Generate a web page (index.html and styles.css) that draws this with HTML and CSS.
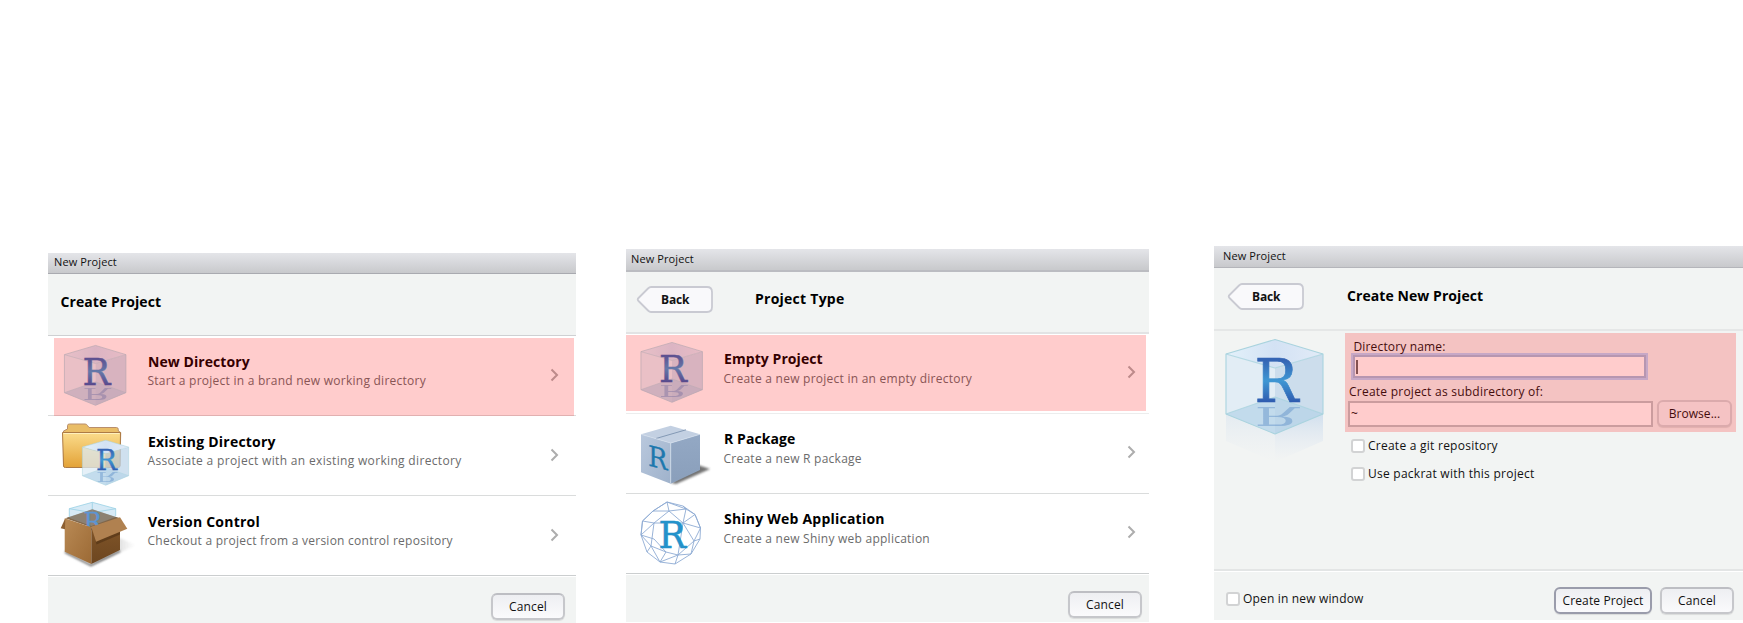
FILE: index.html
```
<!DOCTYPE html>
<html lang="en">
<head>
<meta charset="utf-8">
<title>New Project</title>
<link rel="stylesheet" href="styles.css">
</head>
<body>
<svg class="defs" width="0" height="0">
  <defs>
    <linearGradient id="rblue" x1="0" y1="0" x2="0" y2="1">
      <stop offset=".2" stop-color="#3565b4"/><stop offset=".5" stop-color="#3f97d3"/><stop offset=".8" stop-color="#2f5cb0"/>
    </linearGradient>
    <linearGradient id="fade" x1="0" y1="0" x2="0" y2="1">
      <stop offset="0" stop-color="#c3d7ec" stop-opacity=".7"/><stop offset="1" stop-color="#dfe6f2" stop-opacity="0"/>
    </linearGradient>
    <linearGradient id="topface" x1="0" y1="0" x2="1" y2="0">
      <stop offset="0" stop-color="#e3f1fa"/><stop offset=".5" stop-color="#d3e2f4"/><stop offset="1" stop-color="#e2ebf7"/>
    </linearGradient>
    <linearGradient id="folder" x1="0" y1="0" x2="0" y2="1">
      <stop offset="0" stop-color="#fbdc8c"/><stop offset="1" stop-color="#e3a237"/>
    </linearGradient>
    <linearGradient id="carton" x1="0" y1="0" x2="1" y2="1">
      <stop offset="0" stop-color="#b98a55"/><stop offset="1" stop-color="#9c6a35"/>
    </linearGradient>
    <linearGradient id="cartonDark" x1="0" y1="0" x2="0" y2="1">
      <stop offset="0" stop-color="#84582a"/><stop offset="1" stop-color="#6d4620"/>
    </linearGradient>
    <linearGradient id="steelL" x1="0" y1="0" x2="1" y2="1">
      <stop offset="0" stop-color="#b9c8dd"/><stop offset="1" stop-color="#9fb2cb"/>
    </linearGradient>
    <linearGradient id="steelR" x1="0" y1="0" x2="0" y2="1">
      <stop offset="0" stop-color="#93a8c4"/><stop offset="1" stop-color="#8a9fbb"/>
    </linearGradient>
    <linearGradient id="shade" x1="0" y1="0" x2="1" y2="0">
      <stop offset="0" stop-color="#444" stop-opacity=".75"/><stop offset="1" stop-color="#666" stop-opacity="0"/>
    </linearGradient>
    <filter id="soft" x="-20%" y="-20%" width="140%" height="140%"><feGaussianBlur stdDeviation="1.2"/></filter>
    <clipPath id="floor"><path d="M1 76 50 59 98 76 50 96z"/></clipPath>
    <symbol id="cube" viewBox="0 0 100 98" overflow="visible">
      <path d="M1 16 50 30V96L1 76z" fill="#dcebf6" opacity=".75"/>
      <path d="M98 16 50 30V96L98 76z" fill="#bfd5e9" opacity=".75"/>
      <path d="M50 1.500 98 16 50 30 1 16z" fill="url(#topface)"/>
      <path d="M1 76 50 59 98 76 50 96z" fill="#b5d3e8" opacity=".7"/>
      <g clip-path="url(#floor)" opacity=".35"><text class="glyph" transform="translate(29.500 68.500) scale(1 -.42)" font-size="60" textLength="44" lengthAdjust="spacingAndGlyphs" fill="#3f78bd">R</text></g>
      <g fill="none" stroke="#a9d3de" stroke-width="1.100" stroke-linejoin="round">
        <path d="M50 1.500 98 16V76L50 96 1 76V16z"/><path d="M1 16 50 30 98 16M1 76 50 59 98 76" opacity=".8"/>
      </g>
      <text class="glyph" x="29.500" y="63.500" font-size="59.500" textLength="44" lengthAdjust="spacingAndGlyphs" fill="url(#rblue)" stroke="url(#rblue)" stroke-width=".7">R</text>
    </symbol>
    <symbol id="chevron" viewBox="0 0 9 14"><path d="M1.500 1.500 7 7 1.500 12.500" fill="none" stroke="#adadad" stroke-width="2"/></symbol>
    <symbol id="backshape" viewBox="0 0 78 29">
      <path d="M15 2H71Q76 2 76 7V22Q76 27 71 27H15Q13.500 27 12 25.500L2.500 16Q1 14.500 2.500 13L12 3.500Q13.500 2 15 2z" fill="#f9f9fb" stroke="#c9cad2" stroke-width="1.800"/>
    </symbol>
  </defs>
</svg>

<main class="stage">
  <section class="panel panel-create">
    <div class="titlebar">New Project</div>
    <header class="head"><h1>Create Project</h1></header>
    <div class="rows">
      <div class="row marked">
        <svg class="pic" viewBox="0 0 100 79"><use href="#cube" x="15.800" y="8.500" width="63.400" height="62.100"/></svg>
        <div class="copy"><h2>New Directory</h2><p>Start a project in a brand new working directory</p></div>
        <svg class="chev"><use href="#chevron"/></svg>
      </div>
      <div class="row">
        <svg class="pic" viewBox="0 0 100 79">
          <path d="M15.500 50V15L19.500 13V9.500Q19.500 8 21.500 8H37Q38.700 8 39.500 9.500L41 11.500H68.500Q70.300 11.500 70.300 13.500V15L72.700 16.500 72 50z" fill="#e9bd67" stroke="#b98e6c"/>
          <path d="M14.500 16.500H72.500L72 50Q72 51.500 70 51.500H17.500Q15.500 51.500 15.500 50z" fill="url(#folder)" stroke="#ad7b45"/>
          <path d="M15.500 17.500H71.500" stroke="#fff0bd"/>
          <use href="#cube" x="33.900" y="23.500" width="47.700" height="46.700"/>
        </svg>
        <div class="copy"><h2 class="loose">Existing Directory</h2><p class="wide">Associate a project with an existing working directory</p></div>
        <svg class="chev"><use href="#chevron"/></svg>
      </div>
      <div class="row">
        <svg class="pic" viewBox="0 0 100 79">
          <path d="M72 42 88 49.300 60 62 44 68z" fill="url(#shade)" opacity=".6" filter="url(#soft)"/>
          <path d="M17 56 43 69.500 72 55" fill="none" stroke="#777" stroke-width="2" filter="url(#soft)"/>
          <path d="M17.300 22.300 44.300 13.300 72 22.300 43.300 31.300z" fill="#8a6d4e"/>
          <path d="M21.300 12.700 44.300 6.300 67.700 12.700V21L43.300 30 21.300 22z" fill="#bcdcf0" opacity=".6"/>
          <path d="M21.300 21V12.700L44.300 6.300 67.700 12.700V20M21.300 12.700 44.300 16.700 67.700 12.700M44.300 6.300V16" fill="none" stroke="#98d0e4" stroke-width=".8"/>
          <path d="M19 21.700 44.300 13.300 70 21.700 43.300 31z" fill="#7a634a" opacity=".6"/>
          <text class="glyph" x="35.500" y="34" font-size="25" textLength="18.500" lengthAdjust="spacingAndGlyphs" fill="#5c95d3" stroke="#5c95d3" stroke-width=".3">R</text>
          <path d="M16.700 22.300 43.300 31.300V68L16.700 55.700z" fill="url(#carton)"/>
          <path d="M72 22.300 43.300 31.300V68L72 54z" fill="url(#cartonDark)"/>
          <path d="M17.300 22.300 12.700 32.300 17 33.300z" fill="#8d6032"/>
          <path d="M45 34 48.500 48.500 72 38.500V35z" fill="#4b2e12" opacity=".55"/>
          <path d="M43.300 30.700 72 21.300 79.300 32.700 48 45.700z" fill="#b08150"/>
        </svg>
        <div class="copy"><h2 class="loose">Version Control</h2><p>Checkout a project from a version control repository</p></div>
        <svg class="chev"><use href="#chevron"/></svg>
      </div>
    </div>
    <footer class="foot"><button class="btn cancel">Cancel</button></footer>
  </section>

  <section class="panel panel-type">
    <div class="titlebar">New Project</div>
    <header class="head"><span class="back"><svg><use href="#backshape"/></svg><b>Back</b></span><h1>Project Type</h1></header>
    <div class="rows">
      <div class="row marked">
        <svg class="pic" viewBox="0 0 98 79"><use href="#cube" x="14.300" y="7.500" width="63.400" height="62.100"/></svg>
        <div class="copy"><h2>Empty Project</h2><p>Create a new project in an empty directory</p></div>
        <svg class="chev"><use href="#chevron"/></svg>
      </div>
      <div class="row">
        <svg class="pic" viewBox="0 0 98 79">
          <path d="M72 51 84 55 50 70 45 69z" fill="#444" opacity=".75" filter="url(#soft)"/>
          <path d="M15 20.300 44.700 29V69.700L15 58.300z" fill="url(#steelL)"/>
          <path d="M74 20.300 44.700 29V69.700L74 56z" fill="url(#steelR)"/>
          <path d="M44.700 11.700 74 20.300 44.700 29 15 20.300z" fill="#c3d0e2"/>
          <path d="M30 24.500 60 15.800" stroke="#8399b5"/>
          <path d="M44.700 29V69.500M15 20.300 44.700 29 74 20.300" fill="none" stroke="#d2ddeb" stroke-width=".8"/>
          <text class="glyph" transform="translate(22 51.500) skewY(14)" font-size="28.500" textLength="19.500" lengthAdjust="spacingAndGlyphs" fill="#1e78ae" stroke="#1e78ae" stroke-width=".3">R</text>
        </svg>
        <div class="copy"><h2>R Package</h2><p>Create a new R package</p></div>
        <svg class="chev"><use href="#chevron"/></svg>
      </div>
      <div class="row">
        <svg class="pic" viewBox="0 0 98 79">
          <g fill="none" stroke="#8eabd4" stroke-width=".9" stroke-linejoin="round">
            <path d="M41 8 57 12 69 20.500 74.500 34 74 45 65 60 49 70 34 68 21 58 15 41 16.500 27 27 17z"/>
            <path d="M27 17 41 8 43 17 60 15 57 12M43 17 27 17 16.500 27 28 29 43 17 57 29 60 15 69 20.500M28 29 15 41 25 52 21 58M28 29 25 52 34 68M28 29 57 29 74.500 34 69 20.500M57 29 69 20.500M57 29 68 47 74 45M74.500 34 68 47 65 60M68 47 52 61 65 60M52 61 49 70M52 61 34 68M25 52 40 58 34 68M40 58 52 61M15 41 28 45 40 58M57 29 52 61M16.500 27 15 41M41 8 60 15"/>
          </g>
          <text class="glyph" x="32.500" y="53.800" font-size="38" textLength="27.500" lengthAdjust="spacingAndGlyphs" fill="#2492ca" stroke="#2492ca" stroke-width=".5">R</text>
        </svg>
        <div class="copy"><h2 class="loose">Shiny Web Application</h2><p>Create a new Shiny web application</p></div>
        <svg class="chev"><use href="#chevron"/></svg>
      </div>
    </div>
    <footer class="foot"><button class="btn cancel">Cancel</button></footer>
  </section>

  <section class="panel panel-form">
    <div class="titlebar">New Project</div>
    <header class="head"><span class="back"><svg><use href="#backshape"/></svg><b>Back</b></span><h1>Create New Project</h1></header>
    <div class="body">
      <svg class="hero" viewBox="0 0 110 140">
        <path d="M1 76 50 96V124L1 103z" fill="url(#fade)" opacity=".45"/>
        <path d="M98 76 50 96V124L98 103z" fill="url(#fade)"/>
        <use href="#cube" width="100" height="98"/>
      </svg>
      <div class="form">
        <div class="fields">
          <label class="lab-dir">Directory name:</label>
          <div class="input focus"><i></i></div>
          <label class="lab-sub">Create project as subdirectory of:</label>
          <div class="pair"><div class="input path">~</div><button class="btn browse">Browse...</button></div>
        </div>
        <div class="check"><i></i>Create a git repository</div>
        <div class="check second"><i></i>Use packrat with this project</div>
      </div>
    </div>
    <footer class="foot">
      <div class="check open"><i></i>Open in new window</div>
      <button class="btn primary">Create Project</button><button class="btn cancel">Cancel</button>
    </footer>
  </section>
</main>
</body>
</html>
```
FILE: styles.css
```
* { box-sizing: border-box; }
body { margin: 0; background: #fff; color: #111; font: 12px/18px "Open Sans", "Noto Sans", sans-serif; letter-spacing: .25px; overflow: hidden; }
h1, h2, p { margin: 0; }
svg { display: block; }
.defs { position: absolute; }
.glyph { font-family: "DejaVu Serif", serif; letter-spacing: 0; }

.stage { display: flex; height: 623px; padding-left: 48px; }
.panel { display: flex; flex-direction: column; flex: none; }
.panel-create { width: 528px; margin-top: 253px; }
.panel-type { width: 523px; margin: 249px 0 1px 50px; }
.panel-form { width: 529px; margin: 246px 0 3px 65px; }

.titlebar { flex: none; height: 21px; padding-left: 6px; border-bottom: 1px solid #a9aab0; background: linear-gradient(#e4e5e9, #c8c9cc); font-size: 11px; line-height: 18px; letter-spacing: .1px; }
.panel-type .titlebar { height: 23px; padding-left: 5px; line-height: 19px; border-bottom: 2px solid #bbbcc1; }
.panel-form .titlebar { height: 22px; padding-left: 9px; line-height: 20px; border-bottom-color: #b4b5ba; }

.head { display: flex; flex: none; height: 62px; background: #f2f4f3; border-bottom: 1px solid #cfd0d2; }
h1, h2 { font-size: 14px; line-height: 18px; font-weight: 700; color: #000; letter-spacing: .07px; }
h2.loose { letter-spacing: .22px; }
h1 { white-space: nowrap; }
.panel-create .head { padding: 19px 0 0 12.5px; }
.panel-type .head { border-bottom: 2px solid #e2e3e4; padding: 13px 0 0 10px; }
.panel-type h1 { padding: 5px 0 0 41px; letter-spacing: .25px; }
.panel-form .head { height: 63px; padding: 14px 0 0 13px; border-bottom: 2px solid #e5e7e7; }
.panel-form h1 { padding: 5px 0 0 42px; }
.back { position: relative; width: 78px; height: 29px; }
.back svg { width: 78px; height: 29px; }
.back b { position: absolute; left: 25px; top: 6px; letter-spacing: -.15px; }

.row { position: relative; display: flex; height: 80px; border-bottom: 1px solid #dadcdc; background: #fff; }
.row:last-child { border-bottom-color: #cbcecf; }
.pic { width: 100px; height: 79px; flex: none; overflow: visible; }
.panel-type .pic { width: 98px; }
.copy { flex: 1; padding-top: 17px; white-space: nowrap; }
.copy p { color: #6b6b6b; letter-spacing: .25px; margin: 1px 0 0 -.5px; }
.copy p.wide { letter-spacing: .33px; }
.chev { width: 9px; height: 14px; margin: 32px 17px 0 0; }
.panel-type .copy { padding-top: 16px; }
.panel-type .copy p { margin-top: 2px; }
.panel-type .chev { margin: 31px 13px 0 0; }
.marked::after { content: ""; position: absolute; left: 6px; right: 2px; top: 2px; bottom: -1px; background: rgba(255, 0, 0, .2); }
.panel-type .marked::after { left: 0; right: 3px; top: 1px; bottom: 2px; }
.panel-type .marked { border-bottom-color: #eceded; }

.foot { display: flex; flex: 1; justify-content: flex-end; background: #f2f4f3; border-top: 1px solid #fff; }
.panel-create .foot { padding: 16px 11px 0 0; }
.panel-type .foot { padding: 16px 7px 0 0; }
.btn { width: 74px; height: 27px; padding: 0; border: 2px solid #c6c7cb; border-top-color: #bdbec3; border-radius: 6px; background: linear-gradient(#eeeff2, #fafafc); box-shadow: 0 1px 1px rgba(0, 0, 0, .1); color: #111; font: 12px/18px "Open Sans", sans-serif; letter-spacing: .15px; }

.panel-form { background: #f2f4f3; }
.body { display: flex; height: 240px; border-bottom: 2px solid #e3e5e5; }
.hero { width: 110px; height: 140px; flex: none; margin: 7px 10px 0 11px; }
.form { flex: 1; padding-top: 2px; }
.fields { position: relative; width: 391px; height: 99px; }
.fields::after { content: ""; position: absolute; inset: 0; background: rgba(255, 0, 0, .2); }
.fields label { display: block; white-space: nowrap; }
.lab-dir { padding: 5px 0 0 8.500px; height: 21px; letter-spacing: .15px; }
.input { background: #fff; border: 2px solid #bfc4c6; }
.focus { width: 293px; height: 23px; margin: 1px 0 0 8px; padding: 3px 1px; border: 2px solid #a6bcdc; box-shadow: 0 0 0 2px #b9d3f8; }
.focus i { display: block; width: 2px; height: 14px; background: #666; }
.lab-sub { padding: 5px 0 0 4px; height: 23px; letter-spacing: .24px; }
.pair { display: flex; }
.path { width: 305px; height: 26px; margin: 0 4px 0 3px; padding: 2px 1px; }
.browse { width: 75px; background: #f3f4f5; margin-top: -1px; border-color: #d2d5d7; letter-spacing: .05px; }
.check { display: flex; align-items: center; height: 18px; margin: 5px 0 0 6px; }
.check i { width: 14px; height: 14px; margin-right: 3px; border: 2px solid #d2d3d4; border-radius: 3px; background: #fff; }
.check.second { margin-top: 10px; }
.panel-form .foot { padding: 15px 9px 0 12px; }
.check.open { margin: 3px auto 0 0; letter-spacing: .17px; }
.primary { width: 98px; margin-right: 8px; border-color: #9a9cab; letter-spacing: .13px; }
```
